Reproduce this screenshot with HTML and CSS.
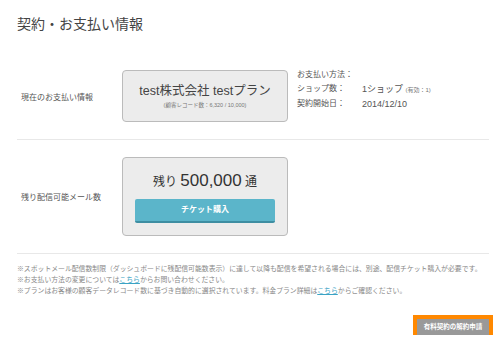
FILE: index.html
```html
<!DOCTYPE html>
<html lang="ja">

<head>
    <meta charset="UTF-8">
    <title>契約・お支払い情報</title>
    <link rel="stylesheet" href="styles.css">
</head>

<body>
    <div class="container">
        <div class="header">契約・お支払い情報</div>

        <div class="row">
            <div class="row-label">現在のお支払い情報</div>
            <div class="panel plan-panel">
                <div class="plan-name">test株式会社 testプラン</div>
                <div class="plan-sub">(顧客レコード数：6,320 / 10,000)</div>
            </div>
            <div class="info">
                <div class="info-line"><span class="info-label">お支払い方法：</span></div>
                <div class="info-line"><span class="info-label">ショップ数：</span><span class="info-value">1ショップ <small>(有効：1)</small></span></div>
                <div class="info-line"><span class="info-label">契約開始日：</span><span class="info-value">2014/12/10</span></div>
            </div>
        </div>

        <div class="row">
            <div class="row-label">残り配信可能メール数</div>
            <div class="panel mail-panel">
                <div class="remain">残り <span class="remain-num">500,000</span> 通</div>
                <a class="ticket-btn" href="#">チケット購入</a>
            </div>
        </div>

        <div class="notes">
            <p>※スポットメール配信数制限（ダッシュボードに残配信可能数表示）に達して以降も配信を希望される場合には、別途、配信チケット購入が必要です。</p>
            <p>※お支払い方法の変更については<a href="#">こちら</a>からお問い合わせください。</p>
            <p>※プランはお客様の顧客データレコード数に基づき自動的に選択されています。料金プラン詳細は<a href="#">こちら</a>からご確認ください。</p>
        </div>

        <div class="actions">
            <a class="cancel-btn" href="#">有料契約の解約申請</a>
        </div>
    </div>
</body>

</html>
```

FILE: styles.css
```css
body {
    background: #fff;
    color: #444;
    font-family: 'Liberation Sans', 'Noto Sans CJK JP', sans-serif;
    margin: 0;
    padding: 0;
}

.container {
    width: 472px;
    margin-left: 17px;
    padding-top: 15px;
}

.header {
    font-size: 14px;
    line-height: 18px;
    color: #444;
    margin-bottom: 20px;
}

.row {
    display: flex;
    align-items: center;
    padding: 17px 0 17px 4px;
    border-bottom: 1px solid #e8e8e8;
}

.row-label {
    width: 101px;
    font-size: 8px;
    color: #555;
}

.panel {
    width: 164px;
    background: #ececec;
    border: 1px solid #bbb;
    border-radius: 4px;
    text-align: center;
}

.plan-panel {
    height: 50px;
    display: flex;
    flex-direction: column;
    justify-content: center;
}

.plan-name {
    font-size: 12.5px;
    line-height: 16px;
    color: #444;
}

.plan-sub {
    font-size: 5.5px;
    color: #777;
    margin-top: 2px;
}

.info {
    margin-left: 9px;
    font-size: 8px;
    color: #555;
    align-self: flex-start;
    margin-top: -2px;
}

.info-line {
    display: flex;
    line-height: 14px;
}

.info-label {
    width: 65px;
}

.info-value {
    font-size: 9px;
}

.info-value small {
    font-size: 6px;
    color: #777;
}

.mail-panel {
    height: 77px;
    padding: 0 12px;
    box-sizing: content-box;
    width: 140px;
    display: flex;
    flex-direction: column;
    justify-content: center;
}

.remain {
    font-size: 12px;
    line-height: 20px;
    color: #333;
    margin-bottom: 7px;
}

.remain-num {
    font-size: 17px;
}

.ticket-btn {
    display: block;
    height: 22px;
    line-height: 22px;
    background: #5bb5ca;
    border-bottom: 2px solid #3e8ea2;
    border-radius: 2px;
    color: #fff;
    font-size: 8px;
    font-weight: bold;
    text-decoration: none;
}

.notes {
    padding-top: 9px;
    font-size: 6.85px;
    color: #888;
}

.notes p {
    margin: 0;
    line-height: 11px;
    white-space: nowrap;
}

.notes a {
    color: #3aa3c5;
    text-decoration: underline;
}

.actions {
    display: flex;
    justify-content: flex-end;
    margin-top: 23px;
}

.cancel-btn {
    display: block;
    width: 72px;
    height: 16px;
    line-height: 16px;
    background: #999;
    color: #fff;
    font-size: 6.5px;
    font-weight: bold;
    text-align: center;
    text-decoration: none;
    outline: 4px solid #ff8800;
}
```
